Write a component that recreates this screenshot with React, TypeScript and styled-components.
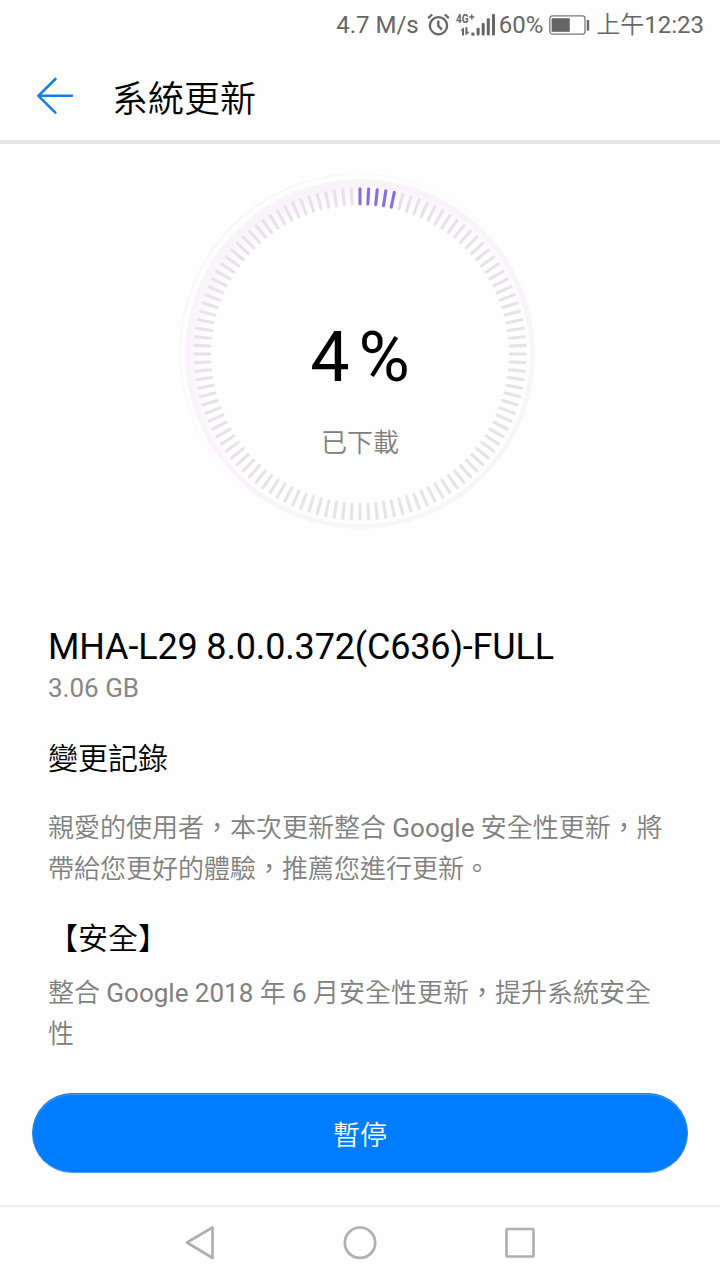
import React from 'react';
import styled, { createGlobalStyle } from 'styled-components';

const GlobalStyle = createGlobalStyle`
  * { box-sizing: border-box; }
  body {
    margin: 0;
    background: #fefefe;
    font-family: Roboto, 'Noto Sans CJK TC', sans-serif;
  }
`;

const Screen = styled.div`
  width: 720px;
  height: 1280px;
  display: flex;
  flex-direction: column;
  overflow: hidden;
  background: #fefefe;
`;

const StatusBar = styled.div`
  height: 50px;
  display: flex;
  align-items: center;
  justify-content: flex-end;
  padding: 0 16px 0 0;
  color: #666;
  font-size: 24px;
  line-height: 50px;
  white-space: nowrap;
  flex: none;
`;

const StatusText = styled.span<{ $gap?: number; $light?: boolean }>`
  margin-right: ${(p) => p.$gap ?? 0}px;
  font-weight: ${(p) => (p.$light ? 350 : 400)};
`;

const StatusIcon = styled.svg<{ $gap?: number }>`
  display: block;
  flex: none;
  margin-right: ${(p) => p.$gap ?? 0}px;
`;

const Header = styled.header`
  height: 94px;
  flex: none;
  display: flex;
  align-items: center;
  padding: 2px 36px 0;
  border-bottom: 4px solid #e6e4e5;
`;

const BackIcon = styled.svg`
  display: block;
  margin-right: 38px;
`;

const Title = styled.h1`
  margin: 8px 0 0;
  font-size: 36px;
  line-height: 50px;
  font-weight: 350;
  color: #000;
`;

const Main = styled.main`
  flex: 1;
  display: flex;
  flex-direction: column;
`;

const Dial = styled.section`
  height: 420px;
  width: 360px;
  margin: 30px auto 0;
  display: grid;
  grid-template: 360px / 360px;
`;

const DialArt = styled.svg`
  grid-area: 1 / 1;
  display: block;
`;

const Readout = styled.div`
  grid-area: 1 / 1;
  display: flex;
  flex-direction: column;
  align-items: center;
  padding-top: 142px;
`;

const Percent = styled.div`
  display: flex;
  gap: 9px;
  font-size: 70px;
  line-height: 82px;
  color: #000;
`;

const Caption = styled.div`
  margin-top: 27px;
  font-size: 26px;
  line-height: 36px;
  font-weight: 350;
  color: #808080;
`;

const Notes = styled.section`
  padding: 28px 40px 0 48px;
`;

const Version = styled.h2`
  margin: 0;
  font-size: 36px;
  line-height: 50px;
  font-weight: 400;
  letter-spacing: -0.16px;
  color: #000;
`;

const Size = styled.div`
  margin-top: -1px;
  font-size: 26px;
  line-height: 34px;
  color: #868686;
`;

const Heading = styled.h3<{ $top: number }>`
  margin: ${(p) => p.$top}px 0 0;
  font-size: 30px;
  line-height: 40px;
  font-weight: 350;
  color: #000;
`;

const Paragraph = styled.p<{ $top: number }>`
  margin: ${(p) => p.$top}px 0 0;
  font-size: 26px;
  line-height: 41px;
  font-weight: 350;
  color: #808080;
`;

const Line = styled.span`
  display: block;
  white-space: nowrap;
`;

const Latin = styled.span`
  font-weight: 400;
`;

const PauseButton = styled.button`
  height: 80px;
  flex: none;
  margin: 0 32px 32px;
  padding: 1px 0 0;
  border: 1px solid #2b83d6;
  border-bottom-color: #4a9df0;
  border-radius: 40px;
  background: #007dff;
  box-shadow: inset 0 1px 0 #3b96f5;
  color: #fff;
  font-family: inherit;
  font-size: 27px;
  font-weight: 350;
`;

const NavBar = styled.nav`
  height: 75px;
  flex: none;
  display: flex;
  justify-content: center;
  gap: 120px;
  padding-top: 15px;
  border-top: 2px solid #ececec;
`;

const NavIcon = styled.svg`
  display: block;
  fill: none;
  stroke: #b0b0b0;
  stroke-width: 2.7;
  stroke-linejoin: round;
`;

const TICKS = 120;
const ACTIVE = 5;

const App = () => (
  <>
    <GlobalStyle />
    <Screen>
      <StatusBar>
        <StatusText $gap={8}>4.7 M/s</StatusText>
        <StatusIcon $gap={6} width="23" height="24" viewBox="0 0 23 24" fill="none" stroke="#666" strokeWidth="2.3">
          <circle cx="11.5" cy="12.7" r="8.6" />
          <path d="M11.3 7.6v5.3l3.7 3.7" />
          <path d="M1.2 5.2 5.2 1.5M21.8 5.2 17.8 1.5" />
        </StatusIcon>
        <StatusIcon $gap={3} width="40" height="34" viewBox="0 -4 40 34" fill="#666">
          <text x="0" y="11" fontSize="13.5" fontWeight="700" textLength="12.5" lengthAdjust="spacingAndGlyphs">4G</text>
          <path d="M13.3 4.3h5v1.4h-5zM15.1 2.4h1.4v5.2h-1.4z" />
          <path d="M4.2 18.6 8 15.2v8.4H6v-5zM9.4 15.2h2v4.6h2.4l-4.4 3.8z" />
          <rect x="15.4" y="20.6" width="3" height="3" />
          <rect x="20.6" y="15.8" width="3" height="7.8" rx="1" />
          <rect x="25.7" y="11" width="3" height="12.6" rx="1" />
          <rect x="30.8" y="6.3" width="3" height="17.3" rx="1" />
          <rect x="36" y="2" width="3" height="21.6" rx="1" />
        </StatusIcon>
        <StatusText $gap={6}>60%</StatusText>
        <StatusIcon $gap={6} width="41" height="20" viewBox="0 0 41 20">
          <rect x="0.8" y="0.9" width="35.2" height="18.2" rx="2.5" fill="none" stroke="#777" strokeWidth="1.3" />
          <rect x="2.6" y="3.2" width="18.2" height="13.6" fill="#666" />
          <rect x="37.8" y="5" width="2.4" height="10.6" fill="#666" />
        </StatusIcon>
        <StatusText $light>上午</StatusText>
        <StatusText>12:23</StatusText>
      </StatusBar>

      <Header>
        <BackIcon width="38" height="38" viewBox="0 0 38 38" fill="none" stroke="#1a7de0" strokeWidth="2.6" strokeLinecap="round" strokeLinejoin="round">
          <path d="M36 18.8H2.4M19.4 2 2.4 18.8l17 16.8" />
        </BackIcon>
        <Title>系統更新</Title>
      </Header>

      <Main>
        <Dial>
          <DialArt width="360" height="360" viewBox="0 0 360 360">
            <defs>
              <linearGradient id="rim" x1="0" y1="0" x2="1" y2="1">
                <stop offset="0" stopColor="#f3f1f2" />
                <stop offset="0.6" stopColor="#fefefe" />
              </linearGradient>
              <radialGradient id="well" cx="0.52" cy="0.535" r="0.535">
                <stop offset="0.87" stopColor="#fefefe" />
                <stop offset="1" stopColor="#f5f2f5" />
              </radialGradient>
            </defs>
            <circle cx="178.5" cy="178.5" r="178.5" fill="none" stroke="url(#rim)" strokeWidth="1.2" />
            <circle cx="180" cy="180" r="174.7" fill="url(#well)" />
            <circle cx="180" cy="180" r="172.5" fill="none" stroke="#f7f5f7" strokeWidth="4.5" />
            <g strokeWidth="3.1" strokeLinecap="round">
              {Array.from({ length: TICKS }, (_, i) => (
                <path
                  key={i}
                  d="M180 14.8v15"
                  stroke={i < ACTIVE ? '#8672d4' : '#e6e3e6'}
                  transform={`rotate(${(i * 360) / TICKS} 180 180)`}
                />
              ))}
            </g>
          </DialArt>
          <Readout>
            <Percent>
              <span>4</span>
              <span>%</span>
            </Percent>
            <Caption>已下載</Caption>
          </Readout>
        </Dial>

        <Notes>
          <Version>MHA-L29 8.0.0.372(C636)-FULL</Version>
          <Size>3.06 GB</Size>
          <Heading $top={34}>變更記錄</Heading>
          <Paragraph $top={29}>
            <Line>親愛的使用者，本次更新整合 <Latin>Google</Latin> 安全性更新，將</Line>
            <Line>帶給您更好的體驗，推薦您進行更新。</Line>
          </Paragraph>
          <Heading $top={29}>【安全】</Heading>
          <Paragraph $top={14}>
            <Line>整合 <Latin>Google 2018</Latin> 年 <Latin>6</Latin> 月安全性更新，提升系統安全</Line>
            <Line>性</Line>
          </Paragraph>
        </Notes>
      </Main>

      <PauseButton>暫停</PauseButton>

      <NavBar>
        <NavIcon width="40" height="40" viewBox="0 0 40 40">
          <path d="M7 20.5 32.5 5.5v30.5z" />
        </NavIcon>
        <NavIcon width="40" height="40" viewBox="0 0 40 40">
          <circle cx="20" cy="20.7" r="15.2" />
        </NavIcon>
        <NavIcon width="40" height="40" viewBox="0 0 40 40">
          <rect x="6.5" y="7" width="27" height="27.5" rx="1" />
        </NavIcon>
      </NavBar>
    </Screen>
  </>
);

export default App;
